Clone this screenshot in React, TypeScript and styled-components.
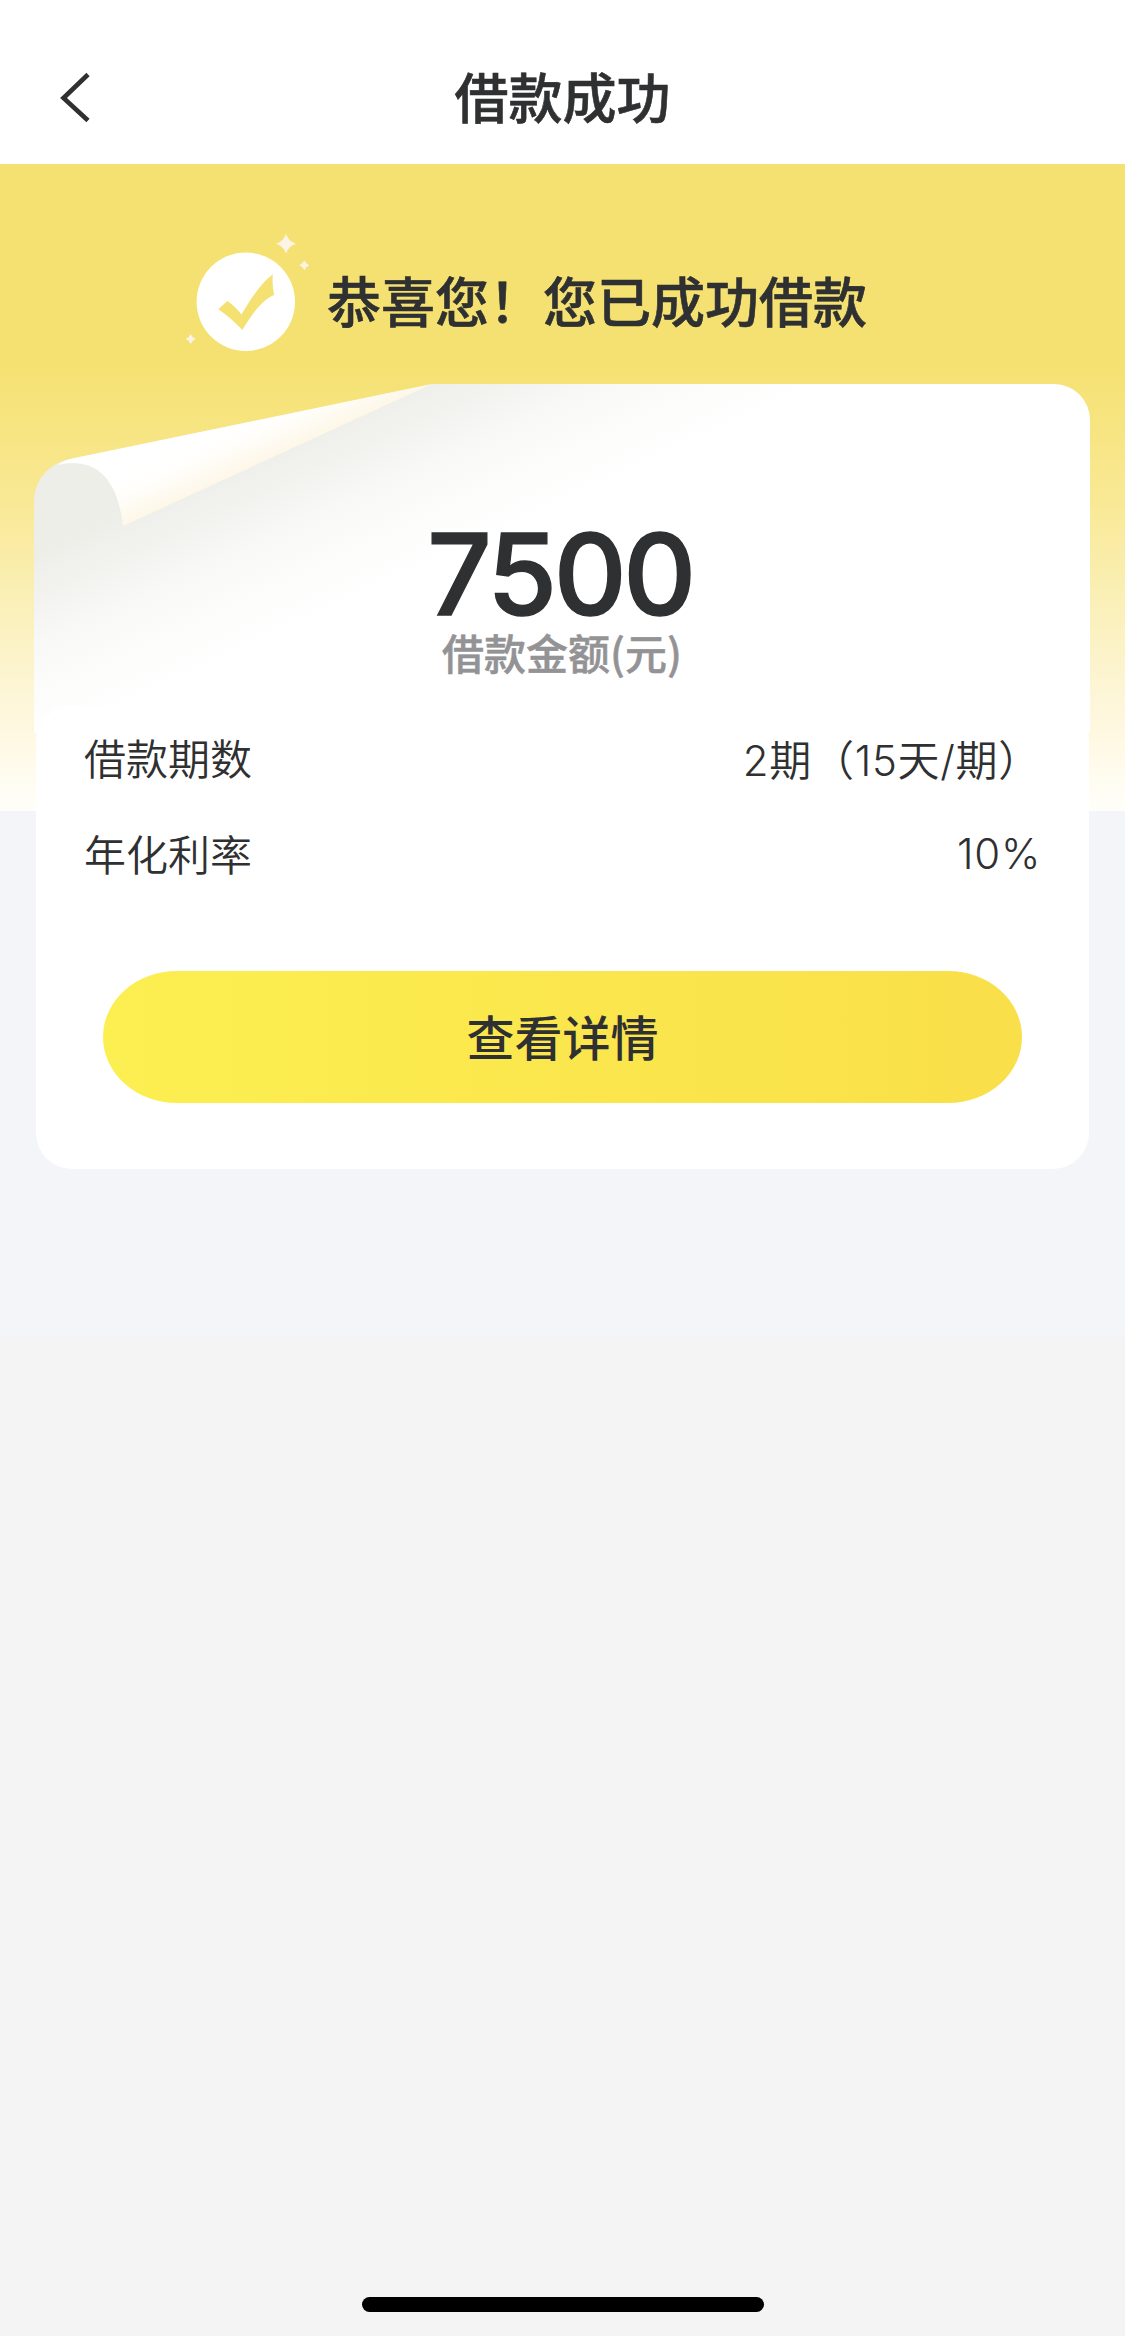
import React from 'react';
import styled, { createGlobalStyle } from 'styled-components';

const GlobalStyle = createGlobalStyle`
  *, *::before, *::after { box-sizing: border-box; }
  body {
    margin: 0;
    background: #f4f4f4;
    color: #2f3031;
    font-family: "Noto Sans CJK SC", sans-serif;
  }
`;

const Screen = styled.div`
  display: flex;
  flex-direction: column;
  width: 1125px;
  height: 2336px;
  background: #f4f4f4;
`;

const Header = styled.header`
  display: grid;
  grid-template-columns: 150px 1fr 150px;
  align-items: center;
  height: 164px;
  padding-top: 32px;
  background: #fff;
`;

const BackButton = styled.button`
  display: flex;
  padding: 0 0 0 58px;
  border: 0;
  background: none;
`;

const Title = styled.h1`
  margin: 0 0 5px;
  text-align: center;
  font-size: 54px;
  line-height: 80px;
  font-weight: 500;
  -webkit-text-stroke: 0.6px currentColor;
`;

const Main = styled.main`
  display: flex;
  flex-direction: column;
  height: 1173px;
  padding: 0 35px 0 34px;
  background: linear-gradient(
      #f5e171 0, #f5e171 200px, #f7e583 270px, #f9e996 340px,
      #faefb5 430px, #fcf4d0 510px, #fff9e5 580px, #fffefa 647px
    ) top / 100% 647px no-repeat #f4f5f9;
`;

const Congrats = styled.section`
  display: flex;
  align-items: center;
  height: 220px;
  padding: 56px 0 0 146px;
`;

const CongratsText = styled.p`
  margin: 0 0 4px 13px;
  font-size: 54px;
  line-height: 80px;
  font-weight: 500;
  white-space: nowrap;
  -webkit-text-stroke: 0.6px currentColor;
`;

const SuccessIcon = styled.svg`
  flex: none;
  margin-top: -20px;
`;

const Card = styled.section`
  position: relative;
  display: flex;
  flex-direction: column;
  height: 785px;
`;

const Paper = styled.svg`
  position: absolute;
  inset: 0 auto auto 0;
`;

const Summary = styled.div`
  position: relative;
  display: flex;
  flex-direction: column;
  align-items: center;
  height: 322px;
  padding-top: 131px;
`;

const Amount = styled.strong`
  margin-right: 4px;
  font-family: Inter, sans-serif;
  font-size: 113px;
  line-height: 118px;
  font-weight: 500;
  letter-spacing: -3.4px;
  -webkit-text-stroke: 1.4px currentColor;
`;

const AmountLabel = styled.span`
  margin-top: -2px;
  color: #939395;
  font-size: 42px;
  line-height: 42px;
  font-weight: 500;
  -webkit-text-stroke: 0.5px currentColor;
`;

const Details = styled.div`
  position: relative;
  flex: 1;
  display: flex;
  flex-direction: column;
  margin: 0 1px 0 2px;
  padding: 2px 48px 0;
  border-radius: 36px;
  background: #fff;
`;

const DetailRow = styled.div`
  display: flex;
  align-items: center;
  justify-content: space-between;
  height: 96px;
  font-size: 42px;
  font-weight: 350;
`;

const DetailValue = styled.span`
  font-family: Inter, "Noto Sans CJK SC", sans-serif;
  padding-top: 2px;
  letter-spacing: 0.7px;
`;

const PrimaryButton = styled.button`
  align-self: center;
  width: 919px;
  height: 132px;
  margin-top: 71px;
  padding: 0 0 4px;
  border: 0;
  border-radius: 74px / 66px;
  background: linear-gradient(90deg, #fcef51, #f9df49);
  color: #2f3031;
  font-family: inherit;
  font-size: 48px;
  font-weight: 500;
`;

const HomeIndicator = styled.div`
  width: 402px;
  height: 15px;
  margin: auto auto 24px 362px;
  border-radius: 8px;
  background: #000;
`;

const details = [
  { label: '借款期数', value: '2期（15天/期）' },
  { label: '年化利率', value: '10%' },
];

function CheckBadge() {
  return (
    <SuccessIcon width="134" height="124" viewBox="180 230 134 124" aria-hidden="true">
      <circle cx="245.8" cy="301.8" r="49.2" fill="#fff" />
      <path
        d="M218.3 309.3 227.3 301Q235 306 241.5 314.5C250 300 260 284 272.9 274.3Q271.8 285 274.2 295C262 300 252 314 242.300 330Q231 318 218.300 309.300Z"
        fill="#f5e171"
      />
      <g fill="#fdf4e8">
        <path d="M286 233.700Q288.200 241.500 296 243.700Q288.200 245.900 286 253.700Q283.800 245.900 276 243.700Q283.800 241.500 286 233.700Z" />
        <path d="M304.300 260.200Q305.600 263.900 309.300 265.200Q305.600 266.500 304.300 270.200Q303 266.500 299.300 265.200Q303 263.900 304.300 260.200Z" />
        <path d="M190.700 334Q192 337.700 195.700 339Q192 340.300 190.700 344Q189.400 340.300 185.700 339Q189.400 337.700 190.700 334Z" />
      </g>
    </SuccessIcon>
  );
}

function CurledPaper() {
  return (
    <Paper width="1056" height="349" viewBox="34 384 1056 349" aria-hidden="true">
      <defs>
        <linearGradient id="shade" gradientUnits="userSpaceOnUse" x1="118" y1="516" x2="193" y2="679">
          <stop offset="0" stopColor="#eeeee9" />
          <stop offset="0.22" stopColor="#f2f2ef" />
          <stop offset="0.45" stopColor="#f8f8f6" />
          <stop offset="0.7" stopColor="#fcfcfb" />
          <stop offset="1" stopColor="#fff" />
        </linearGradient>
        <linearGradient id="flap" gradientUnits="userSpaceOnUse" x1="190" y1="440" x2="213" y2="490">
          <stop offset="0" stopColor="#fff" />
          <stop offset="0.4" stopColor="#fffefb" />
          <stop offset="1" stopColor="#fdf6e5" />
        </linearGradient>
      </defs>
      <path d="M34 733V502C34 482 47 464 70 459L432 384H1054A36 36 0 0 1 1090 420V733Z" fill="url(#shade)" />
      <path d="M57 465Q63 460.500 70 459L432 384 123 526C119 490 105 463 73 463Q65 463 57 465Z" fill="url(#flap)" />
    </Paper>
  );
}

export default function App() {
  return (
    <Screen>
      <GlobalStyle />
      <Header>
        <BackButton aria-label="返回">
          <svg width="34" height="52" viewBox="58 72 34 52" fill="none" stroke="#2f3031" strokeWidth="4.6">
            <path d="M88 74.500 63.500 98 88 120.500" />
          </svg>
        </BackButton>
        <Title>借款成功</Title>
      </Header>
      <Main>
        <Congrats>
          <CheckBadge />
          <CongratsText>恭喜您！您已成功借款</CongratsText>
        </Congrats>
        <Card>
          <CurledPaper />
          <Summary>
            <Amount>7500</Amount>
            <AmountLabel>借款金额(元)</AmountLabel>
          </Summary>
          <Details>
            {details.map(({ label, value }) => (
              <DetailRow key={label}>
                <span>{label}</span>
                <DetailValue>{value}</DetailValue>
              </DetailRow>
            ))}
            <PrimaryButton>查看详情</PrimaryButton>
          </Details>
        </Card>
      </Main>
      <HomeIndicator />
    </Screen>
  );
}
